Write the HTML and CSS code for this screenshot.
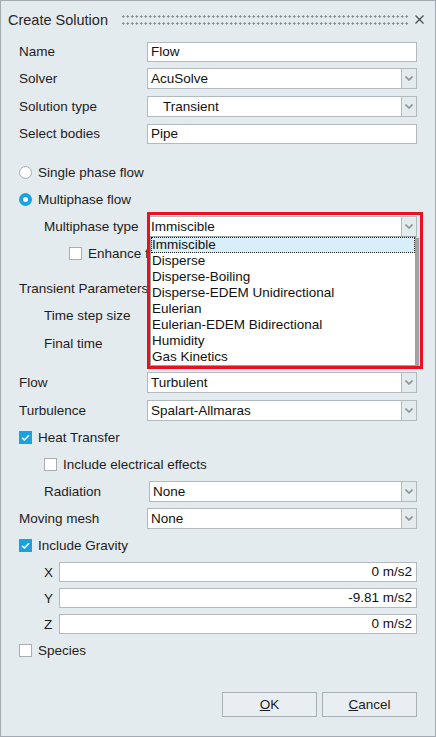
FILE: index.html
```html
<!DOCTYPE html>
<html lang="en">
<head>
  <meta charset="UTF-8" />
  <title>Create Solution</title>
  <link rel="stylesheet" href="styles.css">
</head>
<body>

<div class="dialog">
  <div class="titlebar">
    <span class="title">Create Solution</span>
    <span class="grip"></span>
    <svg class="close" width="9" height="9" viewBox="0 0 9 9">
      <path d="M0.5 0.5 L8.5 8.5 M8.5 0.5 L0.5 8.5" stroke="#4a4f53" stroke-width="1.3" fill="none" />
    </svg>
  </div>

  <div class="content">
    <div class="row">
      <span class="lbl">Name</span>
      <div class="field">Flow</div>
    </div>
    <div class="row">
      <span class="lbl">Solver</span>
      <div class="combo"><div class="combo-value">AcuSolve</div><div class="combo-btn"><svg width="8" height="5" viewBox="0 0 8 5"><path d="M0.5 0.5 L4 4 L7.5 0.5" stroke="#8c9196" stroke-width="1.6" fill="none"/></svg></div></div>
    </div>
    <div class="row gap1">
      <span class="lbl">Solution type</span>
      <div class="combo"><div class="combo-value indent">Transient</div><div class="combo-btn"><svg width="8" height="5" viewBox="0 0 8 5"><path d="M0.5 0.5 L4 4 L7.5 0.5" stroke="#8c9196" stroke-width="1.6" fill="none"/></svg></div></div>
    </div>
    <div class="row">
      <span class="lbl">Select bodies</span>
      <div class="field">Pipe</div>
    </div>

    <div class="row gap12">
      <span class="radio"></span>
      <span class="opt">Single phase flow</span>
    </div>
    <div class="row">
      <span class="radio on"></span>
      <span class="opt">Multiphase flow</span>
    </div>
    <div class="row">
      <span class="lbl sub">Multiphase type</span>
      <div class="combo-wrap">
        <div class="combo"><div class="combo-value">Immiscible</div><div class="combo-btn"><svg width="8" height="5" viewBox="0 0 8 5"><path d="M0.5 0.5 L4 4 L7.5 0.5" stroke="#8c9196" stroke-width="1.6" fill="none"/></svg></div></div>
        <ul class="popup">
          <li class="current">Immiscible</li>
          <li>Disperse</li>
          <li>Disperse-Boiling</li>
          <li>Disperse-EDEM Unidirectional</li>
          <li>Eulerian</li>
          <li>Eulerian-EDEM Bidirectional</li>
          <li>Humidity</li>
          <li>Gas Kinetics</li>
        </ul>
        <div class="highlight"></div>
      </div>
    </div>
    <div class="row">
      <span class="check sub2"></span>
      <span class="opt clipped">Enhance flow stability</span>
    </div>

    <div class="row gap8">
      <span class="lbl">Transient Parameters</span>
    </div>
    <div class="row">
      <span class="lbl sub">Time step size</span>
    </div>
    <div class="row gap1">
      <span class="lbl sub">Final time</span>
    </div>

    <div class="row gap12">
      <span class="lbl">Flow</span>
      <div class="combo"><div class="combo-value">Turbulent</div><div class="combo-btn"><svg width="8" height="5" viewBox="0 0 8 5"><path d="M0.5 0.5 L4 4 L7.5 0.5" stroke="#8c9196" stroke-width="1.6" fill="none"/></svg></div></div>
    </div>
    <div class="row gap1">
      <span class="lbl">Turbulence</span>
      <div class="combo"><div class="combo-value">Spalart-Allmaras</div><div class="combo-btn"><svg width="8" height="5" viewBox="0 0 8 5"><path d="M0.5 0.5 L4 4 L7.5 0.5" stroke="#8c9196" stroke-width="1.6" fill="none"/></svg></div></div>
    </div>
    <div class="row">
      <span class="check on"><svg width="13" height="13" viewBox="0 0 13 13"><path d="M3 6.8 L5.4 9 L10 4.2" stroke="#fff" stroke-width="1.6" fill="none"/></svg></span>
      <span class="opt">Heat Transfer</span>
    </div>
    <div class="row">
      <span class="check sub1"></span>
      <span class="opt">Include electrical effects</span>
    </div>
    <div class="row">
      <span class="lbl sub radiation">Radiation</span>
      <div class="combo"><div class="combo-value">None</div><div class="combo-btn"><svg width="8" height="5" viewBox="0 0 8 5"><path d="M0.5 0.5 L4 4 L7.5 0.5" stroke="#8c9196" stroke-width="1.6" fill="none"/></svg></div></div>
    </div>
    <div class="row">
      <span class="lbl">Moving mesh</span>
      <div class="combo"><div class="combo-value">None</div><div class="combo-btn"><svg width="8" height="5" viewBox="0 0 8 5"><path d="M0.5 0.5 L4 4 L7.5 0.5" stroke="#8c9196" stroke-width="1.6" fill="none"/></svg></div></div>
    </div>
    <div class="row">
      <span class="check on"><svg width="13" height="13" viewBox="0 0 13 13"><path d="M3 6.8 L5.4 9 L10 4.2" stroke="#fff" stroke-width="1.6" fill="none"/></svg></span>
      <span class="opt">Include Gravity</span>
    </div>
    <div class="row short">
      <span class="axis">X</span>
      <div class="field num">0 m/s2</div>
    </div>
    <div class="row short">
      <span class="axis">Y</span>
      <div class="field num">-9.81 m/s2</div>
    </div>
    <div class="row short">
      <span class="axis">Z</span>
      <div class="field num">0 m/s2</div>
    </div>
    <div class="row short">
      <span class="check"></span>
      <span class="opt">Species</span>
    </div>
  </div>

  <div class="footer">
    <button class="btn"><u>O</u>K</button>
    <button class="btn"><u>C</u>ancel</button>
  </div>
</div>

</body>
</html>
```

FILE: styles.css
```css
html, body {
  margin: 0;
  padding: 0;
}
body {
  font-family: "Liberation Sans", Arial, sans-serif;
  font-size: 13.5px;
  color: #1e1c22;
}
.dialog {
  width: 436px;
  height: 737px;
  box-sizing: border-box;
  border: 1px solid #a4abb0;
  background: #e4ebef;
  display: flex;
  flex-direction: column;
}
.titlebar {
  height: 37px;
  display: flex;
  align-items: center;
  padding-left: 7px;
  flex: none;
}
.title {
  font-size: 14.5px;
  color: #24262a;
}
.grip {
  width: 288px;
  height: 14px;
  margin-left: 13px;
  margin-top: 1px;
  background-image: radial-gradient(circle, #858b90 1px, transparent 1.3px);
  background-size: 4.5px 7px;
}
.close {
  margin-left: 6px;
  margin-top: -1px;
}
.content {
  flex: 1;
  padding: 0 18px;
}
.row {
  height: 27px;
  display: flex;
  align-items: center;
}
.row.short {
  height: 26px;
}
.gap1 { margin-top: 1px; }
.gap8 { margin-top: 8px; }
.gap12 { margin-top: 12px; }
.lbl {
  width: 128px;
  flex: none;
  white-space: nowrap;
}
.lbl.sub {
  padding-left: 25px;
  width: 103px;
}
.lbl.sub.radiation {
  width: 105px;
}
.field {
  flex: 1;
  height: 20px;
  box-sizing: border-box;
  border: 1px solid #b3babf;
  background: #fff;
  padding-left: 3px;
  line-height: 18px;
  color: #111;
}
.field.num {
  text-align: right;
  padding-right: 4px;
}
.combo-wrap {
  flex: 1;
  position: relative;
}
.combo {
  flex: 1;
  height: 21px;
  display: flex;
}
.combo-value {
  flex: 1;
  box-sizing: border-box;
  border: 1px solid #b3babf;
  background: #fff;
  padding-left: 3px;
  line-height: 19px;
  color: #111;
}
.combo-value.indent {
  padding-left: 15px;
}
.combo-btn {
  width: 15px;
  box-sizing: border-box;
  border: 1px solid #b3babf;
  border-left: none;
  display: flex;
  align-items: center;
  justify-content: center;
}
.popup {
  position: absolute;
  left: 3px;
  top: 20px;
  width: 266px;
  margin: 0;
  padding: 0;
  list-style: none;
  box-sizing: border-box;
  border: 1px solid #9aa0a4;
  background: #fff;
  box-shadow: 3px 2px 1px rgba(0, 0, 0, 0.3);
  z-index: 2;
}
.popup li {
  height: 16px;
  line-height: 16px;
  padding-left: 1px;
  color: #111;
  white-space: nowrap;
}
.popup li.current {
  background: #d8eff9;
  outline: 1px dotted #222;
  outline-offset: -1px;
}
.highlight {
  position: absolute;
  left: 0;
  top: -4px;
  width: 276px;
  height: 157px;
  box-sizing: border-box;
  border: 3px solid #e8111e;
  z-index: 3;
}
.opt {
  margin-left: 6px;
  white-space: nowrap;
}
.opt.clipped {
  max-width: 62px;
  overflow: hidden;
}
.radio {
  width: 13px;
  height: 13px;
  box-sizing: border-box;
  border-radius: 50%;
  border: 1px solid #a9adb1;
  background: #fff;
  flex: none;
}
.radio.on {
  border: 4px solid #17a2e0;
}
.check {
  width: 13px;
  height: 13px;
  box-sizing: border-box;
  border: 1px solid #a9adb1;
  background: #fff;
  flex: none;
}
.check.on {
  border: none;
  background: #17a2e0;
}
.check svg {
  display: block;
}
.check.sub1 {
  margin-left: 25px;
}
.check.sub2 {
  margin-left: 50px;
}
.axis {
  width: 15px;
  margin-left: 25px;
  flex: none;
}
.footer {
  display: flex;
  justify-content: flex-end;
  gap: 5px;
  padding: 0 18px 19px 0;
}
.btn {
  width: 95px;
  height: 25px;
  border: 1px solid #a9b0b5;
  background: #e8eef1;
  font-family: inherit;
  font-size: 13.5px;
  color: #1e1c22;
  padding: 0;
}
```
